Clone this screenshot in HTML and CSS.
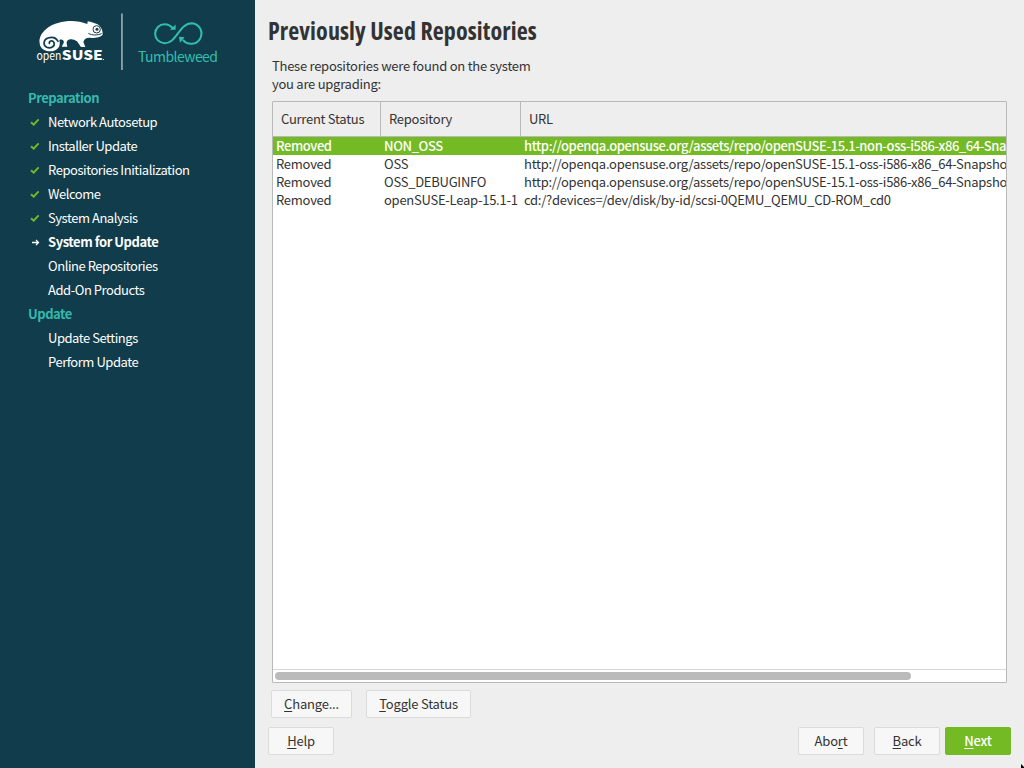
FILE: index.html
```html
<!DOCTYPE html>
<html lang="en">
<head>
<meta charset="utf-8">
<title>Previously Used Repositories</title>
<link rel="stylesheet" href="styles.css">
</head>
<body>
<div class="installer">
  <aside class="sidebar">
    <div class="branding">
      <svg class="logo" width="255" height="82" viewBox="0 0 255 82">
        <g transform="translate(20 5) scale(.33333)">
          <path fill="#fff" d="M59 114C55 88 82 62 114 54C146 45 175 47 202 57L203 49C214 51 222 55 231 57C242 62 249 76 248 88C246 96 228 101 210 98C198 97 192 103 190 111L196 126H183L171 109C160 101 149 101 142 107C139 111 140 116 142 125H125L131 114C134 106 125 101 118 105C124 126 110 139 91 139C73 139 60 130 59 114Z"/>
          <path fill="none" stroke="#113c4b" stroke-width="5" stroke-linecap="round" d="M114 109C108 98 96 95 84 99C69 104 69 121 80 127C92 132 106 124 102 113C98 105 87 107 88 115"/>
          <circle cx="230" cy="73" r="11" fill="#fff" stroke="#113c4b" stroke-width="3"/><circle cx="231" cy="73" r="4.500" fill="#113c4b"/>
          <path fill="none" stroke="#113c4b" stroke-width="3" d="M205 85C217 92 232 91 245 86"/>
        </g>
        <text class="logo-open" x="36.500" y="60" textLength="25" lengthAdjust="spacingAndGlyphs">open</text>
        <text class="logo-suse" x="61.800" y="60.300" textLength="41" lengthAdjust="spacingAndGlyphs">SUSE</text>
        <circle cx="103.500" cy="59.500" r=".6" fill="#fff"/>
        <rect x="121.200" y="13.500" width="1.500" height="56.500" fill="#a9b7bc"/>
        <g transform="translate(115.300 5.200) scale(.33333)" fill="none" stroke="#30bfae" stroke-width="6">
          <path d="M174 71C166 61 158 57 148 57A28.500 28.500 0 0 0 148 114C185 114 191 54 230 54A31 31 0 1 1 203 104"/>
          <path fill="#30bfae" stroke="none" d="M181 58V74H164ZM191 95L208 96L194 113Z"/>
        </g>
        <text class="logo-product" x="138" y="61.500" textLength="80" lengthAdjust="spacing">Tumbleweed</text>
      </svg>
    </div>
    <nav class="steps">
      <div class="group">Preparation</div>
      <div class="step"><svg class="mark" viewBox="0 0 12 12"><path class="check" d="M2 6.200L4.700 8.700L9.600 3.400"/></svg>Network Autosetup</div>
      <div class="step"><svg class="mark" viewBox="0 0 12 12"><path class="check" d="M2 6.200L4.700 8.700L9.600 3.400"/></svg>Installer Update</div>
      <div class="step"><svg class="mark" viewBox="0 0 12 12"><path class="check" d="M2 6.200L4.700 8.700L9.600 3.400"/></svg>Repositories Initialization</div>
      <div class="step"><svg class="mark" viewBox="0 0 12 12"><path class="check" d="M2 6.200L4.700 8.700L9.600 3.400"/></svg>Welcome</div>
      <div class="step"><svg class="mark" viewBox="0 0 12 12"><path class="check" d="M2 6.200L4.700 8.700L9.600 3.400"/></svg>System Analysis</div>
      <div class="step current"><svg class="mark" viewBox="0 0 12 12"><path class="arrow" d="M3 6.500H9.500M7 4L9.500 6.500L7 9"/></svg>System for Update</div>
      <div class="step"><span class="mark"></span>Online Repositories</div>
      <div class="step"><span class="mark"></span>Add-On Products</div>
      <div class="group">Update</div>
      <div class="step"><span class="mark"></span>Update Settings</div>
      <div class="step"><span class="mark"></span>Perform Update</div>
    </nav>
  </aside>
  <main class="content">
    <h1 class="title">Previously Used Repositories</h1>
    <p class="intro">These repositories were found on the system<br>you are upgrading:</p>
    <div class="table">
      <div class="row head"><span>Current Status</span><span>Repository</span><span>URL</span></div>
      <div class="row selected"><span>Removed</span><span>NON_OSS</span><span>http://openqa.opensuse.org/assets/repo/openSUSE-15.1-non-oss-i586-x86_64-Snapshot</span></div>
      <div class="row"><span>Removed</span><span>OSS</span><span>http://openqa.opensuse.org/assets/repo/openSUSE-15.1-oss-i586-x86_64-Snapshot</span></div>
      <div class="row"><span>Removed</span><span>OSS_DEBUGINFO</span><span>http://openqa.opensuse.org/assets/repo/openSUSE-15.1-oss-i586-x86_64-Snapshot</span></div>
      <div class="row"><span>Removed</span><span>openSUSE-Leap-15.1-1</span><span>cd:/?devices=/dev/disk/by-id/scsi-0QEMU_QEMU_CD-ROM_cd0</span></div>
      <div class="scrollbar"><div class="thumb"></div></div>
    </div>
    <div class="actions">
      <button class="btn change"><span><u>C</u>hange...</span></button>
      <button class="btn toggle"><span><u>T</u>oggle Status</span></button>
    </div>
    <div class="footer">
      <button class="btn"><span><u>H</u>elp</span></button>
      <button class="btn abort"><span>Abo<u>r</u>t</span></button>
      <button class="btn back"><span><u>B</u>ack</span></button>
      <button class="btn next"><span><u>N</u>ext</span></button>
    </div>
  </main>
  <svg class="pointer" width="3" height="4" viewBox="0 0 3 4"><path d="M0 0L3 3V4H0Z"/></svg>
</div>
</body>
</html>
```
FILE: styles.css
```css
* { box-sizing: border-box; }
body { margin: 0; }
.installer {
  position: relative;
  display: flex;
  width: 1024px;
  height: 768px;
  overflow: hidden;
  background: #eee;
  color: #333;
  font: 13px/18px "Noto Sans CJK SC", "Noto Sans", sans-serif;
  letter-spacing: -.26px;
}
.sidebar { width: 255px; flex: none; background: #113c4b; color: #fff; letter-spacing: -.46px; }
.branding { height: 86px; letter-spacing: 0; }
.logo { display: block; }
.logo-open { font: 12px "Noto Sans CJK SC", sans-serif; fill: #fff; }
.logo-suse { font: 900 13px "Noto Sans CJK SC", sans-serif; fill: #fff; }
.logo-product { font: 14px "Noto Sans CJK SC", sans-serif; fill: #30bfae; }
.group, .step { height: 24px; line-height: 24px; white-space: nowrap; }
.group { padding-left: 28px; color: #35b9ab; font-weight: 700; }
.step { display: flex; padding-left: 29px; }
.mark { width: 12px; height: 12px; margin: 6px 7px 0 0; flex: none; }
.check { fill: none; stroke: #73ba25; stroke-width: 2; }
.arrow { fill: none; stroke: #fff; stroke-width: 1.3; }
.current { font-weight: 700; }
.content { flex: 1; min-width: 0; padding: 12px 13px 0; }
.title {
  height: 45px;
  margin: 0;
  font: 700 24px/37px "Open Sans", sans-serif;
  font-stretch: 75%;
  letter-spacing: .1px;
  white-space: nowrap;
}
.intro { height: 44px; margin: 0; padding-left: 4px; }
.table {
  display: flex;
  flex-direction: column;
  width: 735px;
  height: 582px;
  margin-left: 4px;
  overflow: hidden;
  background: #fff;
  border: 1px solid #b9b9b9;
  border-radius: 1px;
}
.row { display: grid; grid-template-columns: 108px 140px 1fr; height: 18px; flex: none; line-height: 18px; white-space: nowrap; }
.row span { min-width: 0; padding-left: 3px; overflow: hidden; }
.head { height: 35px; line-height: 33px; background: #eee; border-bottom: 1px solid #b9b9b9; }
.head span { padding-left: 8px; border-right: 1px solid #b9b9b9; }
.head span:last-child { border: 0; }
.selected { background: #73ba25; color: #fff; font-weight: 500; letter-spacing: -.41px; }
.scrollbar { height: 13px; margin-top: auto; padding: 2px; border-top: 1px solid #d8d8d8; }
.thumb { width: 636px; height: 8px; border-radius: 4px; background: #bbb; }
.actions { display: flex; gap: 14px; margin: 7px 0 0 3px; }
.btn {
  display: block;
  width: 66px;
  height: 28px;
  padding: 0;
  background: #f7f7f7;
  border: 1px solid #d9dcd9;
  border-radius: 2px;
  color: #333;
  font: inherit;
  letter-spacing: -.2px;
  line-height: 26px;
}
.btn u { text-decoration: underline; text-decoration-thickness: 1px; text-underline-offset: 2px; text-decoration-skip-ink: none; }
.change { width: 81px; }
.toggle { width: 105px; }
.footer { display: flex; margin-top: 9px; }
.abort { margin-left: auto; }
.back { margin-left: 10px; }
.next { margin: 0 0 0 5px; background: #73ba25; border-color: #73ba25; color: #fff; font-weight: 500; }
.pointer { position: absolute; right: 0; bottom: 0; }
```
